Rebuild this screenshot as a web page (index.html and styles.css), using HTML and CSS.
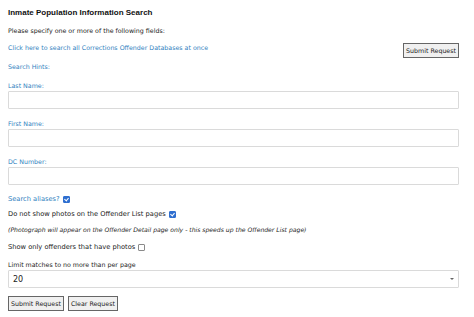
FILE: index.html
```html
<!DOCTYPE html>
<html lang="en">
  <head>
    <meta charset="UTF-8" />
    <title>Inmate Population Information Search</title>
    <link rel="stylesheet" href="styles.css">
  </head>
  <body>
    <form class="search">
      <h1>Inmate Population Information Search</h1>
      <p class="intro">Please specify one or more of the following fields:</p>
      <div class="top-row">
        <a href="#" class="link">Click here to search all Corrections Offender Databases at once</a>
        <button type="submit" class="btn">Submit Request</button>
      </div>
      <a href="#" class="link hints">Search Hints:</a>

      <label class="field">
        <span class="field-label">Last Name:</span>
        <input type="text" />
      </label>
      <label class="field">
        <span class="field-label">First Name:</span>
        <input type="text" />
      </label>
      <label class="field">
        <span class="field-label">DC Number:</span>
        <input type="text" />
      </label>

      <label class="check blue first">Search aliases? <input type="checkbox" checked /></label>
      <label class="check">Do not show photos on the Offender List pages <input type="checkbox" checked /></label>
      <p class="note">(Photograph will appear on the Offender Detail page only - this speeds up the Offender List page)</p>
      <label class="check spaced">Show only offenders that have photos <input type="checkbox" /></label>

      <label class="field limit">
        <span>Limit matches to no more than per page</span>
        <span class="select-wrap">
          <select>
            <option>20</option>
            <option>50</option>
            <option>100</option>
          </select>
        </span>
      </label>

      <div class="actions">
        <button type="submit" class="btn">Submit Request</button>
        <button type="reset" class="btn">Clear Request</button>
      </div>
    </form>
  </body>
</html>
```

FILE: styles.css
```css
:root {
  font-family: "DejaVu Sans", Verdana, sans-serif;
  font-size: 6.3px;
  line-height: 9px;
  color: #222;
}

body {
  margin: 0;
  background: #fff;
}

.search {
  display: flex;
  flex-direction: column;
  align-items: flex-start;
  padding: 7px 15px 0 8px;
}

h1 {
  margin: 0;
  font-family: "Liberation Sans", Arial, sans-serif;
  font-size: 8px;
  line-height: 11px;
  font-weight: bold;
  color: #111;
}

.intro {
  margin: 8px 0 0;
}

.link {
  color: #3182c0;
  text-decoration: none;
}

.top-row {
  display: flex;
  justify-content: space-between;
  align-items: flex-start;
  align-self: stretch;
  margin-top: 8px;
}

.hints {
  margin-top: 4px;
}

.btn {
  font-family: inherit;
  font-size: 6.3px;
  line-height: 9px;
  color: #222;
  background: #f0f0f0;
  border: 1px solid #666;
  border-radius: 0;
  padding: 2px 2px;
  margin: 0;
  cursor: pointer;
}

.field {
  display: flex;
  flex-direction: column;
  align-self: stretch;
  gap: 1px;
  margin-top: 10px;
}

.field-label {
  color: #3182c0;
}

input[type="text"],
select {
  height: 18px;
  box-sizing: border-box;
  border: 1px solid #dadada;
  border-radius: 1px;
  background: #fff;
  font-family: inherit;
  font-size: 8px;
  color: #222;
  padding: 0 4px;
}

.check {
  display: flex;
  align-items: center;
  gap: 3px;
  margin-top: 6px;
  font-size: 6.7px;
}

.check.first {
  margin-top: 10px;
}

.check.spaced {
  margin-top: 9px;
}

.check input {
  appearance: none;
  position: relative;
  width: 7px;
  height: 7px;
  margin: 0;
  border: 1px solid #8a8a8a;
  border-radius: 1px;
  background: #fff;
}

.check input:checked {
  background: #2f6fd0;
  border-color: #2f6fd0;
}

.check input:checked::after {
  content: "";
  position: absolute;
  left: 1px;
  top: 0;
  width: 2px;
  height: 3px;
  border: solid #fff;
  border-width: 0 1px 1px 0;
  transform: rotate(40deg);
}

.blue {
  color: #3182c0;
}

.note {
  margin: 6px 0 0;
  font-style: italic;
  font-size: 6.1px;
}

.limit {
  margin-top: 8px;
}

.select-wrap {
  position: relative;
  display: flex;
}

.select-wrap select {
  appearance: none;
  flex: 1;
  padding-left: 4px;
}

.select-wrap::after {
  content: "";
  position: absolute;
  right: 5px;
  top: 8px;
  border: 2px solid transparent;
  border-top: 2.5px solid #666;
  pointer-events: none;
}

.actions {
  display: flex;
  gap: 4px;
  margin-top: 8px;
}
```
